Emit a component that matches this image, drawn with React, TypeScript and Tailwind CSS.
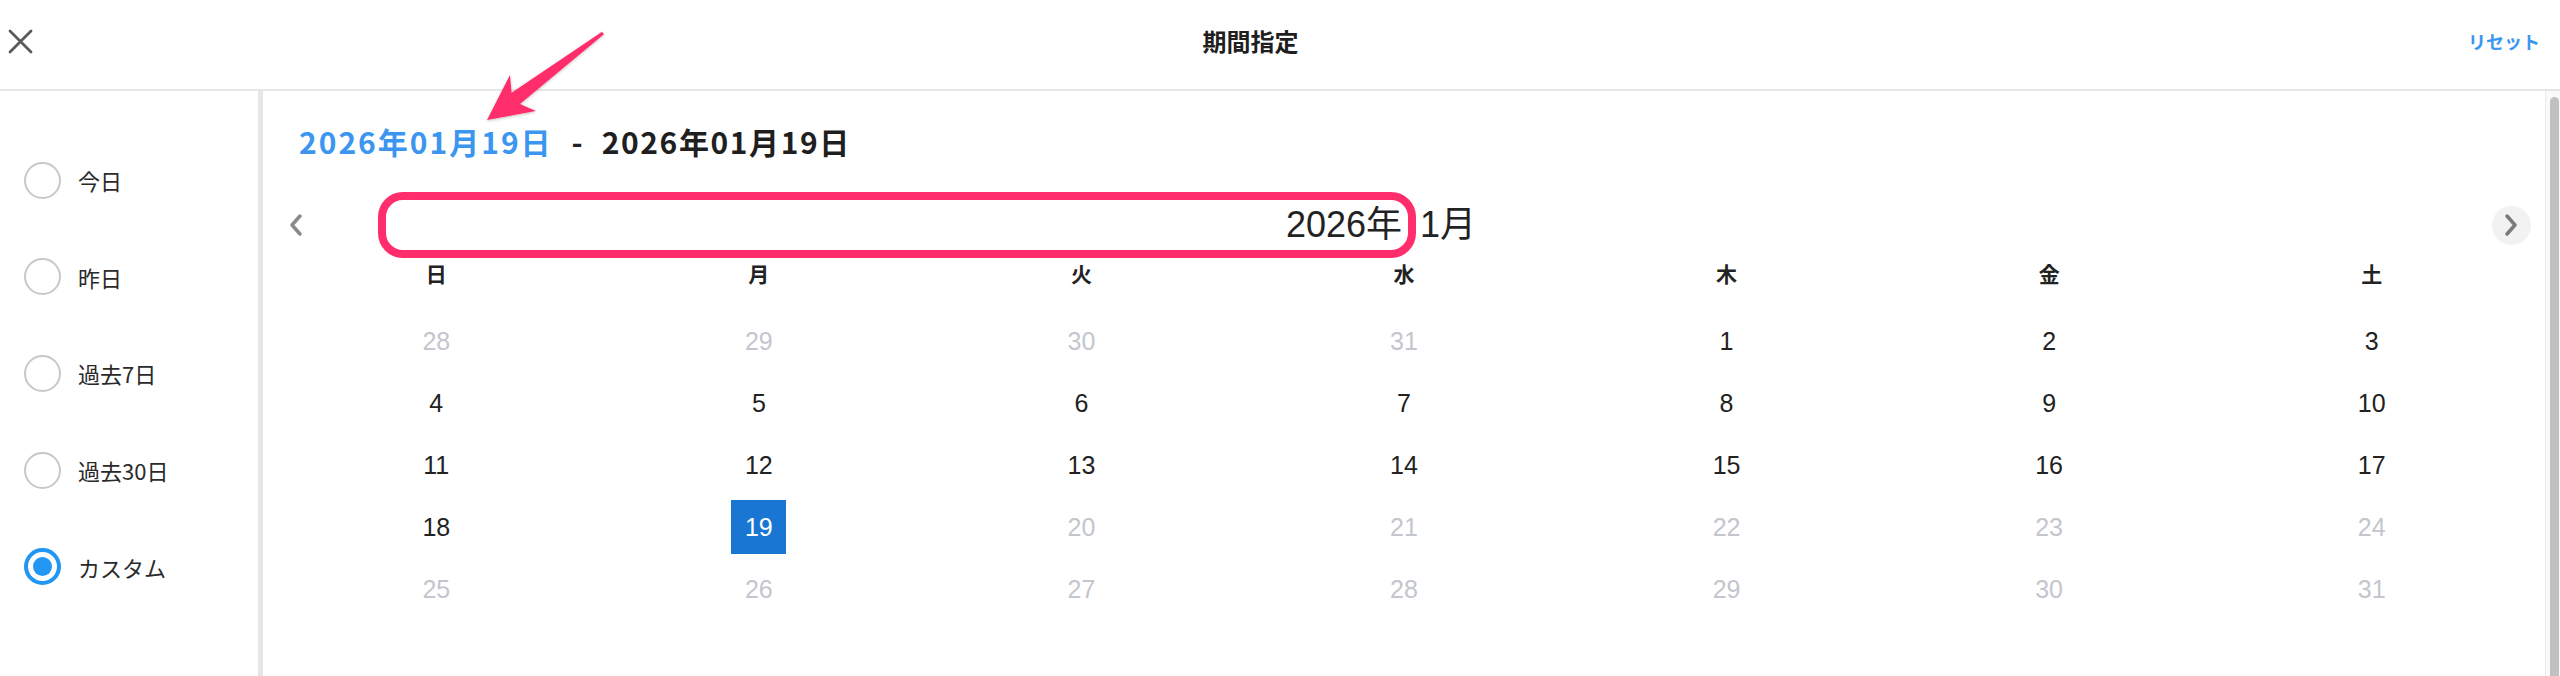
import React from "react";

type Day = { n: number; muted?: boolean; selected?: boolean };

const rows: Day[][] = [
  [{ n: 28, muted: true }, { n: 29, muted: true }, { n: 30, muted: true }, { n: 31, muted: true }, { n: 1 }, { n: 2 }, { n: 3 }],
  [{ n: 4 }, { n: 5 }, { n: 6 }, { n: 7 }, { n: 8 }, { n: 9 }, { n: 10 }],
  [{ n: 11 }, { n: 12 }, { n: 13 }, { n: 14 }, { n: 15 }, { n: 16 }, { n: 17 }],
  [{ n: 18 }, { n: 19, selected: true }, { n: 20, muted: true }, { n: 21, muted: true }, { n: 22, muted: true }, { n: 23, muted: true }, { n: 24, muted: true }],
  [{ n: 25, muted: true }, { n: 26, muted: true }, { n: 27, muted: true }, { n: 28, muted: true }, { n: 29, muted: true }, { n: 30, muted: true }, { n: 31, muted: true }],
];

const weekdays = ["日", "月", "火", "水", "木", "金", "土"];
const options = ["今日", "昨日", "過去7日", "過去30日", "カスタム"];

export default function App() {
  return (
    <div className="relative w-[2560px] h-[676px] overflow-hidden bg-white font-['Noto_Sans_CJK_JP',sans-serif] text-[#222]">
      {/* Header */}
      <div className="h-[91px] border-b-2 border-[#e6e6e6] flex items-center justify-between pl-[8px] pr-[20px] pb-[7px]">
        <svg width="25" height="25" viewBox="0 0 25 25" className="block">
          <path d="M2 2 L23 23 M23 2 L2 23" stroke="#5a5a5a" strokeWidth="2.8" strokeLinecap="round" />
        </svg>
        <div className="text-[24px] font-bold leading-none text-[#1f1f1f]">期間指定</div>
        <div className="text-[18px] font-bold leading-none text-[#3b96f0]">リセット</div>
      </div>

      {/* Body */}
      <div className="flex h-[585px]">
        {/* Sidebar */}
        <div className="w-[263px] shrink-0 border-r-[5px] border-[#e6e6e6] pt-[41px] pl-[24px]">
          {options.map((o, i) => (
            <div key={o} className="h-[96.6px] flex items-center gap-[17px]">
              {i === 4 ? (
                <div className="w-[37px] h-[37px] rounded-full border-[4px] border-[#2196f3] flex items-center justify-center">
                  <div className="w-[19px] h-[19px] rounded-full bg-[#2196f3]" />
                </div>
              ) : (
                <div className="w-[37px] h-[37px] rounded-full border-2 border-[#c8c8c8]" />
              )}
              <span className="text-[22px] leading-none text-[#2a2a2a]">{o}</span>
            </div>
          ))}
        </div>

        {/* Main */}
        <div className="flex-1 flex flex-col pt-[30px]">
          <div className="h-[40px] flex items-center pl-[36px] gap-[19px] text-[30px] font-bold tracking-[2px] leading-none">
            <span className="text-[#3c96ef]">2026年01月19日</span>
            <span className="text-[#222] tracking-normal">-</span>
            <span className="text-[#1f1f1f] tracking-[1.6px]">2026年01月19日</span>
          </div>

          <div className="mt-[44px] h-[40px] flex items-center">
            <div className="w-[67px] shrink-0 pl-[25px] flex items-center">
              <svg width="15" height="24" viewBox="0 0 15 24">
                <path d="M12 3 L4 12 L12 21" fill="none" stroke="#8a8a8a" strokeWidth="3.5" strokeLinecap="round" strokeLinejoin="round" />
              </svg>
            </div>
            <div className="flex-1 grid grid-cols-2 text-[36px] leading-none text-[#222] font-['Liberation_Sans','Noto_Sans_CJK_JP',sans-serif]">
              <span className="text-right pr-[9px]">2026年</span>
              <span className="text-left pl-[9px]">1月</span>
            </div>
            <div className="pr-[14px]">
              <div className="w-[39px] h-[39px] rounded-full bg-[#f2f2f2] flex items-center justify-center">
                <svg width="15" height="24" viewBox="0 0 15 24">
                  <path d="M3 3 L11 12 L3 21" fill="none" stroke="#7a7a7a" strokeWidth="3.5" strokeLinecap="round" strokeLinejoin="round" />
                </svg>
              </div>
            </div>
          </div>

          <div className="px-[12px]">
            <div className="mt-[8px] h-[40px] grid grid-cols-7">
              {weekdays.map((w) => (
                <div key={w} className="flex items-center justify-center text-[21px] font-bold text-[#222] leading-none">
                  {w}
                </div>
              ))}
            </div>
            <div className="mt-[17px]">
              {rows.map((r, ri) => (
                <div key={ri} className="h-[62px] grid grid-cols-7">
                  {r.map((d, di) => (
                    <div key={di} className="flex items-center justify-center">
                      {d.selected ? (
                        <div className="w-[55px] h-[54px] bg-[#1976d2] text-white flex items-center justify-center text-[25px] leading-none font-['Liberation_Sans',sans-serif]">
                          {d.n}
                        </div>
                      ) : (
                        <span
                          className={
                            "text-[25px] leading-none font-['Liberation_Sans',sans-serif] " +
                            (d.muted ? "text-[#c3c6cc]" : "text-[#222]")
                          }
                        >
                          {d.n}
                        </span>
                      )}
                    </div>
                  ))}
                </div>
              ))}
            </div>
          </div>
        </div>

        {/* Scrollbar */}
        <div className="w-[15px] shrink-0 border-l border-[#ececec] bg-[#fafafa] pt-[6px] pl-[4px]">
          <div className="w-[9px] h-[600px] rounded-full bg-[#c1c1c1]" />
        </div>
      </div>

      {/* Annotation overlay */}
      <svg className="absolute left-0 top-0 pointer-events-none" width="2560" height="676" viewBox="0 0 2560 676">
        <defs>
          <filter id="sh" x="-20%" y="-20%" width="140%" height="140%">
            <feDropShadow dx="0" dy="1" stdDeviation="1.5" floodColor="#000" floodOpacity="0.25" />
          </filter>
        </defs>
        <rect x="382" y="196" width="1030" height="58" rx="21" ry="21" fill="none" stroke="#ff2d6b" strokeWidth="8" />
        <polygon
          filter="url(#sh)"
          fill="#ff2d6b"
          points="603.9,34.2 520,104 536,111 487,120 510,75 511.6,92.8 602.1,31.8"
        />
      </svg>
    </div>
  );
}
